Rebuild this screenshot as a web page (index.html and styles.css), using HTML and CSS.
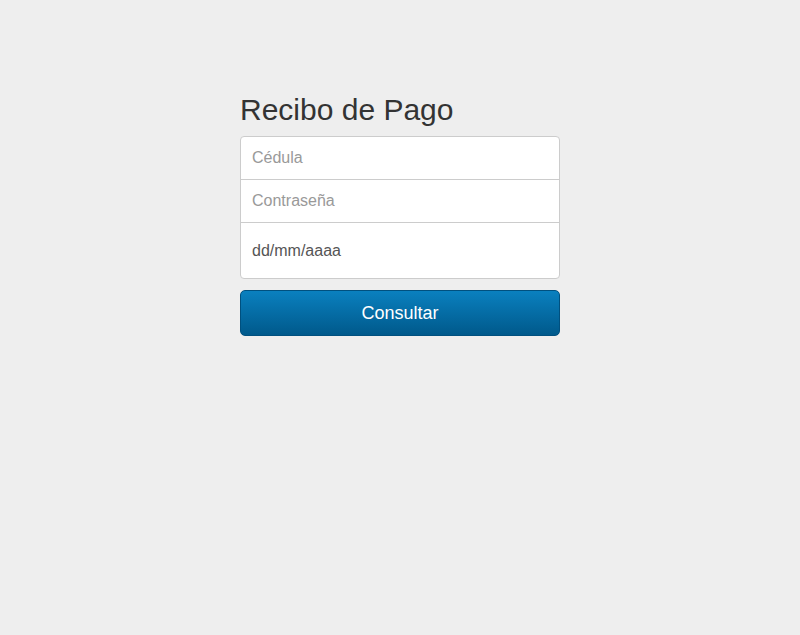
FILE: index.html
```html
<!DOCTYPE html>
<html lang="es">
<head>
<meta charset="utf-8">
<title>Recibo de Pago</title>
<link rel="stylesheet" href="styles.css">
</head>
<body>
<main class="page">
  <form class="signin">
    <h2 class="title">Recibo de Pago</h2>
    <div class="fields">
      <div class="field"><span class="placeholder">Cédula</span></div>
      <div class="field"><span class="placeholder">Contraseña</span></div>
      <div class="field field-date"><span class="value">dd/mm/aaaa</span></div>
    </div>
    <button type="button" class="btn">Consultar</button>
  </form>
</main>
</body>
</html>
```
FILE: styles.css
```css
html, body {
  margin: 0;
  padding: 0;
  background: #eeeeee;
  font-family: "Liberation Sans", Arial, sans-serif;
}
.page {
  display: flex;
  justify-content: center;
  padding-top: 92px;
}
.signin {
  width: 320px;
  display: flex;
  flex-direction: column;
}
.title {
  margin: 0 0 9px 0;
  font-size: 30px;
  font-weight: 400;
  line-height: 35px;
  color: #333333;
}
.fields {
  background: #ffffff;
  border: 1px solid #cccccc;
  border-radius: 4px;
  display: flex;
  flex-direction: column;
}
.field {
  height: 42px;
  display: flex;
  align-items: center;
  padding: 0 11px;
  font-size: 16px;
  border-bottom: 1px solid #cccccc;
}
.field-date {
  height: 55px;
  border-bottom: none;
}
.placeholder {
  color: #999999;
}
.value {
  color: #555555;
}
.btn {
  margin-top: 11px;
  height: 46px;
  width: 100%;
  border: 1px solid #00507f;
  border-radius: 5px;
  background: linear-gradient(to bottom, #0a80bf 0%, #00598b 100%);
  color: #ffffff;
  font-family: "Liberation Sans", Arial, sans-serif;
  font-size: 18px;
  cursor: pointer;
  padding: 0;
}
```
